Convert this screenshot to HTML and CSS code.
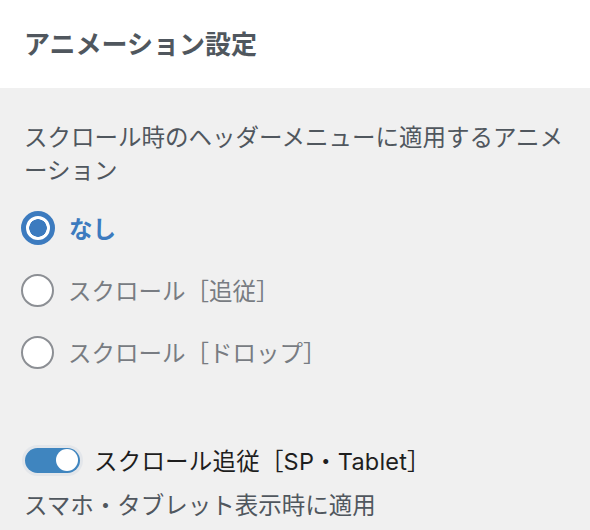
FILE: index.html
```html
<!DOCTYPE html>
<html lang="ja">
<head>
<meta charset="utf-8">
<link rel="stylesheet" href="styles.css">
</head>
<body>
<div class="panel">
  <header class="panel-head">
    <h2 class="panel-title">アニメーション設定</h2>
  </header>
  <section class="panel-body">
    <p class="desc">スクロール時のヘッダーメニューに適用するアニメーション</p>
    <div class="options">
      <label class="option checked"><span class="radio"></span><span class="opt-label">なし</span></label>
      <label class="option"><span class="radio"></span><span class="opt-label">スクロール［追従］</span></label>
      <label class="option"><span class="radio"></span><span class="opt-label">スクロール［ドロップ］</span></label>
    </div>
    <div class="toggle-row">
      <span class="toggle"><span class="knob"></span></span>
      <span class="toggle-label">スクロール追従［SP・Tablet］</span>
    </div>
    <p class="help">スマホ・タブレット表示時に適用</p>
  </section>
</div>
</body>
</html>
```
FILE: styles.css
```css
* { box-sizing: border-box; }
html, body { margin: 0; padding: 0; }
body {
  width: 590px;
  height: 530px;
  overflow: hidden;
  background: #f0f0f0;
  font-family: Inter, "Noto Sans CJK JP", sans-serif;
  color: #50575e;
}
.panel-head {
  height: 88px;
  background: #fff;
  display: flex;
  align-items: center;
  padding: 2px 24px 0;
}
.panel-title {
  margin: 0;
  font-size: 26px;
  font-weight: 700;
  line-height: 1;
  color: #50575e;
}
.panel-body {
  padding: 33px 24px 0;
}
.desc {
  margin: 0;
  font-size: 23.5px;
  line-height: 33px;
  color: #50575e;
}
.options {
  display: flex;
  flex-direction: column;
  margin-top: 10px;
}
.option {
  height: 62px;
  display: flex;
  align-items: center;
  gap: 14px;
  font-size: 23.5px;
  color: #787c82;
}
.radio {
  width: 33px;
  height: 33px;
  border-radius: 50%;
  border: 2px solid #8c8f94;
  background: #fff;
  flex: none;
  margin-left: -3px;
}
.option.checked .radio {
  width: 34px;
  height: 34px;
  border: 5px solid #3c7bbf;
  background: radial-gradient(circle, #3c7bbf 0 8.5px, #fff 9px);
}
.option.checked .opt-label {
  color: #3c7bbf;
  font-weight: 700;
}
.toggle-row {
  display: flex;
  align-items: center;
  gap: 14px;
  height: 40px;
  margin-top: 57px;
}
.toggle {
  width: 55px;
  height: 25px;
  border-radius: 13px;
  background: #3f85bf;
  box-shadow: 0 0 0 3px #e3e6ea;
  display: flex;
  align-items: center;
  justify-content: flex-end;
  padding: 0 2px;
  margin-left: 1px;
  flex: none;
}
.knob {
  width: 22px;
  height: 22px;
  border-radius: 50%;
  background: #fff;
}
.toggle-label {
  font-size: 23.5px;
  color: #1e1e1e;
  letter-spacing: 0.2px;
}
.help {
  margin: 9px 0 0;
  font-size: 23.5px;
  line-height: 33px;
  color: #50575e;
}
```
